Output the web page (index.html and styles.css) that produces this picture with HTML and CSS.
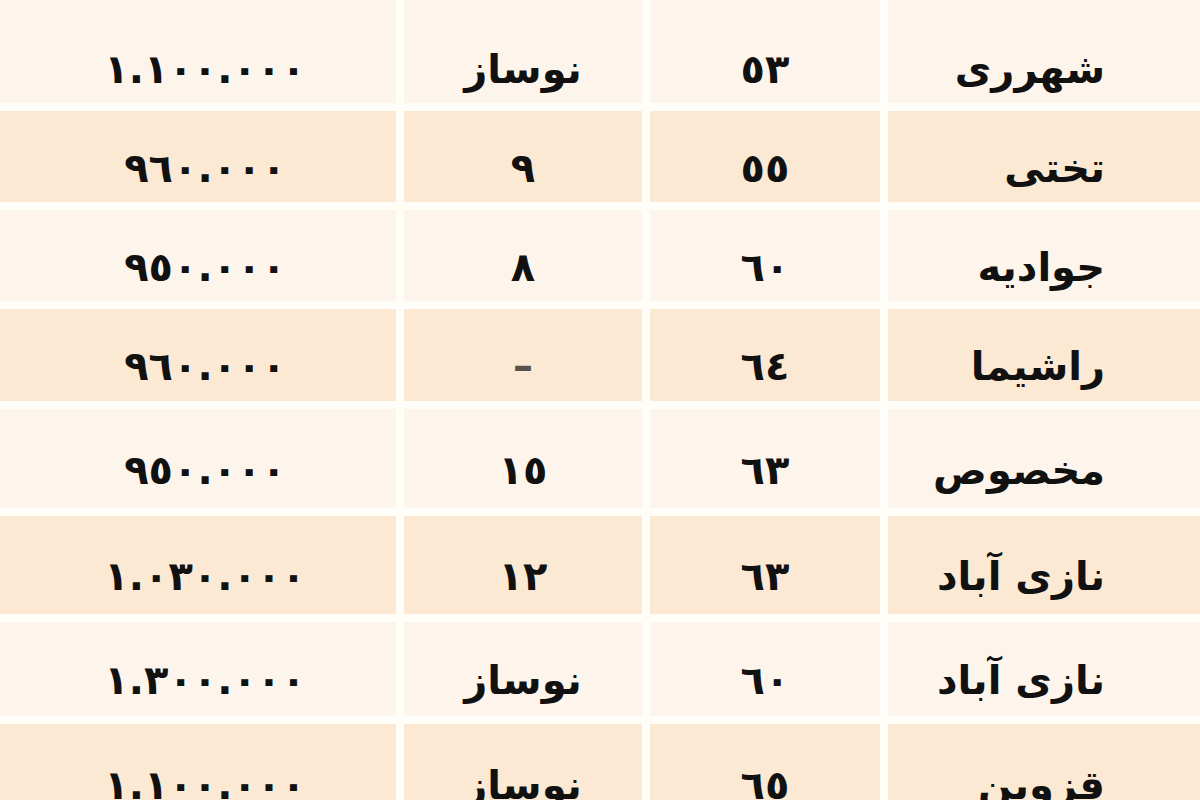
FILE: index.html
```html
<!DOCTYPE html>
<html lang="fa" dir="rtl">
<head>
<meta charset="utf-8">
<link rel="stylesheet" href="styles.css">
</head>
<body>
<div class="table">
  <div class="cell light name"></div><div class="cell light"></div><div class="cell light"></div><div class="cell light"></div>

  <div class="cell light name">شهرری</div><div class="cell light">٥٣</div><div class="cell light">نوساز</div><div class="cell light price">١.١٠٠.٠٠٠</div>

  <div class="cell dark name">تختی</div><div class="cell dark">٥٥</div><div class="cell dark">٩</div><div class="cell dark price">٩٦٠.٠٠٠</div>

  <div class="cell light name">جوادیه</div><div class="cell light">٦٠</div><div class="cell light">٨</div><div class="cell light price">٩٥٠.٠٠٠</div>

  <div class="cell dark name">راشیما</div><div class="cell dark">٦٤</div><div class="cell dark dash">–</div><div class="cell dark price">٩٦٠.٠٠٠</div>

  <div class="cell light name">مخصوص</div><div class="cell light">٦٣</div><div class="cell light">١٥</div><div class="cell light price">٩٥٠.٠٠٠</div>

  <div class="cell dark name">نازی آباد</div><div class="cell dark">٦٣</div><div class="cell dark">١٢</div><div class="cell dark price">١.٠٣٠.٠٠٠</div>

  <div class="cell light name">نازی آباد</div><div class="cell light">٦٠</div><div class="cell light">نوساز</div><div class="cell light price">١.٣٠٠.٠٠٠</div>

  <div class="cell dark name">قزوین</div><div class="cell dark">٦٥</div><div class="cell dark">نوساز</div><div class="cell dark price">١.١٠٠.٠٠٠</div>
</div>
</body>
</html>
```

FILE: styles.css
```css
html, body {
  margin: 0;
  padding: 0;
  background: #fffdf8;
}

body {
  width: 1200px;
  height: 800px;
  overflow: hidden;
  font-family: "DejaVu Sans", "Noto Sans", sans-serif;
  font-weight: bold;
  color: #111;
}

.table {
  direction: rtl;
  display: grid;
  grid-template-columns: 312px 230px 238px 396px;
  grid-template-rows: 4px 91px 91px 91px 92px 99px 98px 94px 100px;
  column-gap: 8px;
  row-gap: 8px;
  background: #fffdf8;
}

.cell {
  display: flex;
  align-items: center;
  justify-content: center;
  font-size: 40px;
  line-height: 1;
  padding-top: 22px;
  box-sizing: border-box;
  overflow: hidden;
}

.light {
  background: #fdf5eb;
}

.dark {
  background: #fce9d3;
}

.name {
  justify-content: flex-start;
  padding-right: 95px;
}

.price {
  padding-left: 14px;
}

.dash {
  color: #5a524a;
}
```
